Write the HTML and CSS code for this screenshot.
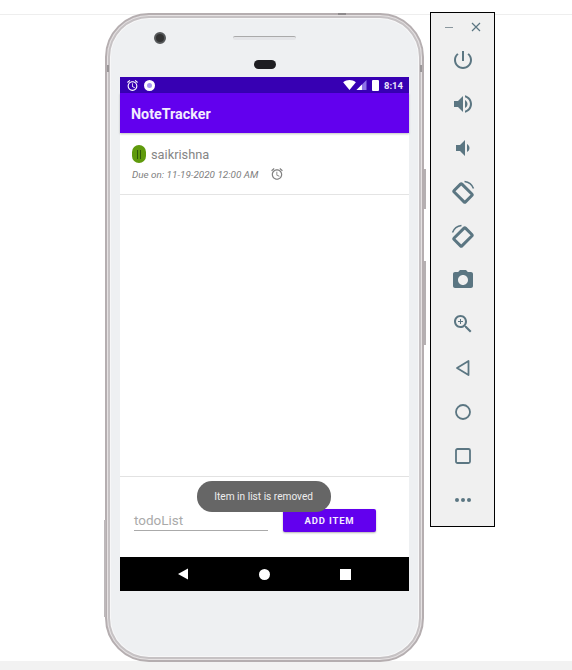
FILE: index.html
```html
<html>
    <head>
        <meta name="viewport" content="width=device-width, initial-scale=1.0">
        <link rel="stylesheet" href="styles.css">
    </head>
    <body>
        <div class="topline"></div>
        <div class="stage">
            <div class="phone">
                <div class="side-btn side-power"></div>
                <div class="side-btn side-volume"></div>
                <div class="side-btn side-lower"></div>
                <div class="side-btn mark-top"></div>
                <div class="side-btn mark-left"></div>
                <div class="side-btn mark-right"></div>
                <div class="head">
                    <div class="head-row">
                        <div class="camera"></div>
                        <div class="speaker"></div>
                    </div>
                    <div class="sensor"></div>
                </div>
                <div class="screen">
                    <div class="statusbar">
                        <svg class="st-alarm" viewBox="0 0 24 24"><path d="M22 5.72l-4.6-3.86-1.29 1.53 4.6 3.86L22 5.72zM7.88 3.39L6.6 1.86 2 5.71l1.29 1.53 4.59-3.85zM12.5 8H11v6l4.75 2.85.75-1.23-4-2.37V8zM12 4c-4.97 0-9 4.03-9 9s4.02 9 9 9c4.97 0 9-4.03 9-9s-4.03-9-9-9zm0 16c-3.87 0-7-3.13-7-7s3.13-7 7-7 7 3.13 7 7-3.13 7-7 7z"/></svg>
                        <div class="st-dot"></div>
                        <div class="st-space"></div>
                        <svg class="st-wifi" viewBox="0 0 14 11"><path d="M7 11 L0 2.6 C4 -0.8 10 -0.8 14 2.6 Z"/></svg>
                        <svg class="st-signal" viewBox="0 0 11 11"><path d="M11 0 V11 H0 Z" fill="#8f73e8"/><path d="M6 5 V11 H0 Z"/></svg>
                        <div class="st-battery"></div>
                        <span class="st-time">8:14</span>
                    </div>
                    <div class="appbar">NoteTracker</div>
                    <div class="list">
                        <div class="item">
                            <div class="item-top">
                                <div class="pause"><span></span><span></span></div>
                                <span class="item-name">saikrishna</span>
                            </div>
                            <div class="item-bottom">
                                <span class="item-due">Due on: 11-19-2020 12:00 AM</span>
                                <svg class="item-alarm" viewBox="0 0 24 24"><path d="M22 5.72l-4.6-3.86-1.29 1.53 4.6 3.86L22 5.72zM7.88 3.39L6.6 1.86 2 5.71l1.29 1.53 4.59-3.85zM12.5 8H11v6l4.75 2.85.75-1.23-4-2.37V8zM12 4c-4.97 0-9 4.03-9 9s4.02 9 9 9c4.97 0 9-4.03 9-9s-4.03-9-9-9zm0 16c-3.87 0-7-3.13-7-7s3.13-7 7-7 7 3.13 7 7-3.13 7-7 7z"/></svg>
                            </div>
                        </div>
                    </div>
                    <div class="form">
                        <div class="input">todoList</div>
                        <div class="add-btn">ADD ITEM</div>
                    </div>
                    <div class="navbar">
                        <svg class="nav-back" viewBox="0 0 11 12"><path d="M0 6 L11 0 V12 Z"/></svg>
                        <div class="nav-home"></div>
                        <div class="nav-recent"></div>
                    </div>
                    <div class="toast"><span class="toast-text">Item in list is removed</span></div>
                </div>
            </div>
            <div class="toolbar">
                <div class="win-btns">
                    <span class="win-min"></span>
                    <svg class="win-close" viewBox="0 0 10 10"><path d="M1 1 L9 9 M9 1 L1 9"/></svg>
                </div>
                <svg class="tool" viewBox="0 0 24 24"><path d="M13 3h-2v10h2V3zm4.83 2.17l-1.42 1.42C17.99 7.86 19 9.81 19 12c0 3.87-3.13 7-7 7s-7-3.13-7-7c0-2.19 1.01-4.14 2.58-5.42L6.17 5.17C4.23 6.82 3 9.26 3 12c0 4.97 4.03 9 9 9s9-4.03 9-9c0-2.74-1.23-5.18-3.17-6.83z"/></svg>
                <svg class="tool" viewBox="0 0 24 24"><path d="M3 9v6h4l5 5V4L7 9H3zm13.5 3c0-1.77-1.02-3.29-2.5-4.03v8.05c1.48-.73 2.5-2.25 2.5-4.02zM14 3.23v2.06c2.89.86 5 3.54 5 6.71s-2.11 5.85-5 6.71v2.06c4.01-.91 7-4.49 7-8.77s-2.99-7.86-7-8.77z"/></svg>
                <svg class="tool" viewBox="0 0 24 24"><path d="M18.5 12c0-1.77-1.02-3.29-2.5-4.03v8.05c1.48-.73 2.5-2.25 2.5-4.02zM5 9v6h4l5 5V4L9 9H5z"/></svg>
                <svg class="tool" viewBox="0 0 24 24"><rect class="tool-line" x="4" y="7.500" width="16" height="11" rx="1" transform="rotate(45 12 13)"/><path class="tool-arc" d="M13.500 1.500 C17.500 2 21 4.500 22.500 8.500"/></svg>
                <svg class="tool" viewBox="0 0 24 24"><rect class="tool-line" x="4" y="7.500" width="16" height="11" rx="1" transform="rotate(-45 12 13)"/><path class="tool-arc" d="M10.500 1.500 C6.500 2 3 4.500 1.500 8.500"/></svg>
                <svg class="tool" viewBox="0 0 24 24"><path fill-rule="evenodd" d="M9 2L7.170 4H4c-1.100 0-2 .9-2 2v12c0 1.100.9 2 2 2h16c1.100 0 2-.9 2-2V6c0-1.100-.9-2-2-2h-3.170L15 2H9zm3 15c-2.760 0-5-2.240-5-5s2.240-5 5-5 5 2.240 5 5-2.240 5-5 5z"/><circle cx="12" cy="12" r="3.200" fill="#f0f0f0"/></svg>
                <svg class="tool" viewBox="0 0 24 24"><path d="M15.5 14h-.79l-.28-.27C15.41 12.59 16 11.11 16 9.500 16 5.910 13.090 3 9.500 3S3 5.910 3 9.500 5.910 16 9.500 16c1.610 0 3.090-.59 4.230-1.570l.27.280v.79l5 4.990L20.490 19l-4.990-5zm-6 0C7.010 14 5 11.990 5 9.500S7.010 5 9.500 5 14 7.010 14 9.500 11.990 14 9.500 14z"/><path d="M12 10h-2v2H9v-2H7V9h2V7h1v2h2v1z"/></svg>
                <svg class="tool" viewBox="0 0 24 24"><path class="tool-thin" d="M17.500 5 V19 L6 12 Z"/></svg>
                <svg class="tool" viewBox="0 0 24 24"><circle class="tool-thin" cx="12" cy="12" r="7"/></svg>
                <svg class="tool" viewBox="0 0 24 24"><rect class="tool-thin" x="5" y="5" width="14" height="14" rx="1.500"/></svg>
                <svg class="tool" viewBox="0 0 24 24"><circle cx="6" cy="12" r="2"/><circle cx="12" cy="12" r="2"/><circle cx="18" cy="12" r="2"/></svg>
            </div>
        </div>
        <div class="footer"></div>
    </body>
</html>
```

FILE: styles.css
```css
body{
    margin: 0;
    background: #fff;
    font-family: Roboto, "Liberation Sans", sans-serif;
    overflow: hidden;
    height: 670px;
}
.topline{
    height: 14px;
    border-bottom: 1px solid #eee;
}
.stage{
    height: 648px;
    margin-top: -2px;
    padding-left: 105px;
    display: flex;
    align-items: flex-start;
    gap: 6px;
}
.footer{
    height: 9px;
    background: #f2f2f2;
}

/* phone body */
.phone{
    position: relative;
    z-index: 1;
    width: 319px;
    height: 649px;
    box-sizing: border-box;
    padding: 0 13px;
    background: #eef0f2;
    border: 2px solid #b5aeb0;
    border-radius: 44px;
    box-shadow: inset 0 0 0 1px #e6e2e3, inset 0 0 0 3px #c6c2c4, inset 0 0 0 4px #f7f7f8;
}
.side-btn{
    position: absolute;
    background: #b5b0b2;
}
.side-power{
    right: -4px;
    top: 154px;
    width: 2px;
    height: 40px;
}
.side-volume{
    right: -4px;
    top: 246px;
    width: 2px;
    height: 84px;
}
.side-lower{
    left: -3px;
    top: 505px;
    width: 2px;
    height: 97px;
    background: #bdb8ba;
}
.mark-top{
    top: -2px;
    left: 231px;
    width: 8px;
    height: 2px;
    background: #8e8a8c;
}
.mark-left{
    top: 50px;
    left: 0;
    width: 2px;
    height: 7px;
    background: #9a9698;
}
.mark-right{
    top: 50px;
    right: 0;
    width: 2px;
    height: 7px;
    background: #9a9698;
}
.head{
    height: 62px;
    box-sizing: border-box;
    padding-top: 17px;
}
.head-row{
    display: flex;
    align-items: center;
    padding-left: 34px;
    gap: 67px;
}
.camera{
    width: 8px;
    height: 8px;
    border-radius: 50%;
    background: #333;
    border: 2px solid #55585a;
}
.speaker{
    width: 63px;
    height: 4px;
    box-sizing: border-box;
    border-radius: 2px;
    background: #e4e5e8;
    border-top: 1px solid #aaa;
}
.sensor{
    width: 22px;
    height: 9px;
    margin: 16px auto 0;
    border-radius: 5px;
    background: #1e1e22;
}

/* app screen */
.screen{
    position: relative;
    height: 514px;
    display: flex;
    flex-direction: column;
    background: #fff;
}
.statusbar{
    height: 16px;
    flex-shrink: 0;
    background: #3700b3;
    display: flex;
    align-items: center;
    padding: 0 6px 0 6px;
    fill: #fff;
}
.st-alarm{
    width: 13px;
    height: 13px;
}
.st-dot{
    width: 5px;
    height: 5px;
    margin-left: 5px;
    border-radius: 50%;
    background: #a796f2;
    border: 3px solid #fff;
    box-sizing: content-box;
}
.st-space{
    flex: 1;
}
.st-wifi{
    width: 13px;
    height: 10px;
}
.st-signal{
    width: 11px;
    height: 10px;
}
.st-battery{
    width: 7px;
    height: 11px;
    margin-left: 5px;
    border-radius: 1px;
    background: #fff;
}
.st-time{
    margin-left: 5px;
    color: #ece6fb;
    font-size: 9.500px;
    font-weight: 700;
}
.appbar{
    height: 40px;
    flex-shrink: 0;
    box-sizing: border-box;
    padding: 2px 0 0 11px;
    display: flex;
    align-items: center;
    background: #6200ee;
    color: #f3ecfe;
    font-size: 14.300px;
    font-weight: 700;
    box-shadow: 0 1px 2px rgba(0,0,0,0.25);
}
.list{
    flex: 1;
}
.item{
    height: 62px;
    box-sizing: border-box;
    padding: 12px 12px 0;
    border-bottom: 1px solid #e4e4e4;
}
.item-top{
    display: flex;
    align-items: center;
    gap: 5px;
    height: 18px;
}
.pause{
    width: 14px;
    height: 18px;
    border-radius: 7px;
    background: #5f9a0c;
    display: flex;
    justify-content: center;
    align-items: center;
    gap: 2px;
}
.pause span{
    width: 1px;
    height: 9px;
    background: #2f5a08;
}
.item-name{
    font-size: 12.800px;
    color: #858585;
}
.item-bottom{
    margin-top: 4px;
    display: flex;
    align-items: center;
    gap: 12px;
    height: 14px;
}
.item-due{
    font-size: 9.900px;
    font-style: italic;
    color: #808080;
}
.item-alarm{
    width: 14px;
    height: 14px;
    fill: #808080;
}
.form{
    height: 81px;
    flex-shrink: 0;
    box-sizing: border-box;
    border-top: 1px solid #e2e2e2;
    padding: 32px 0 0 14px;
    display: flex;
    align-items: flex-start;
    gap: 15px;
}
.input{
    width: 134px;
    height: 22px;
    box-sizing: border-box;
    padding-top: 3px;
    border-bottom: 1px solid #aaa;
    font-size: 13.500px;
    color: #aaa;
}
.add-btn{
    width: 93px;
    height: 23px;
    display: flex;
    align-items: center;
    justify-content: center;
    background: #6200ee;
    border-radius: 2px;
    color: #f3ecfe;
    font-size: 9.500px;
    font-weight: 700;
    letter-spacing: 0.850px;
    box-shadow: 0 1px 2px rgba(0,0,0,0.3);
}
.navbar{
    height: 34px;
    flex-shrink: 0;
    background: #000;
    display: flex;
    align-items: center;
    padding-left: 58px;
    fill: #fff;
}
.nav-back{
    width: 10px;
    height: 12px;
}
.nav-home{
    width: 11px;
    height: 11px;
    margin-left: 71px;
    border-radius: 50%;
    background: #fff;
}
.nav-recent{
    width: 11px;
    height: 11px;
    margin-left: 70px;
    background: #fff;
}
.toast{
    position: absolute;
    left: 77px;
    top: 404px;
    width: 134px;
    height: 31px;
    border-radius: 15px;
    background: #666;
    color: #eee;
    font-size: 11px;
    display: flex;
    align-items: center;
    justify-content: center;
}
.toast-text{
    white-space: nowrap;
    transform: scaleX(0.92);
}

/* emulator toolbar */
.toolbar{
    width: 65px;
    height: 515px;
    margin-top: -1px;
    box-sizing: border-box;
    border: 1px solid #000;
    background: #f0f0f0;
    display: flex;
    flex-direction: column;
    align-items: center;
    gap: 20px;
    padding-top: 35px;
    position: relative;
}
.tool{
    width: 24px;
    height: 24px;
    fill: #5b7682;
    flex-shrink: 0;
}
.tool-line{
    fill: none;
    stroke: #5b7682;
    stroke-width: 3;
}
.tool-arc{
    fill: none;
    stroke: #5b7682;
    stroke-width: 1.500;
}
.tool-thin{
    fill: none;
    stroke: #5b7682;
    stroke-width: 1.800;
    stroke-linejoin: round;
}
.win-btns{
    position: absolute;
    top: 9px;
    left: 14px;
    display: flex;
    align-items: center;
    gap: 18px;
}
.win-min{
    width: 8px;
    height: 1px;
    background: #8a979e;
}
.win-close{
    width: 10px;
    height: 10px;
    fill: none;
    stroke: #5b7682;
    stroke-width: 1.200;
}
```
